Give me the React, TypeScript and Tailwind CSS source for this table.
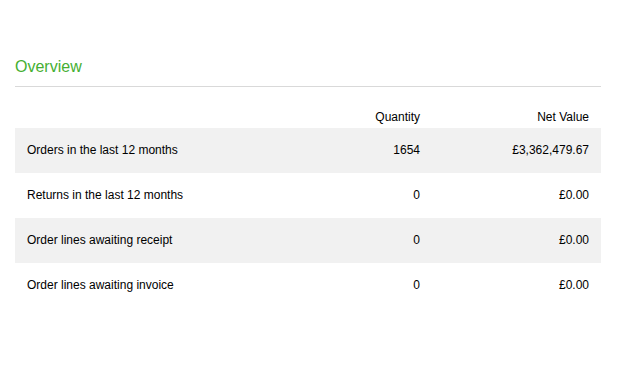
export default function App() {
  const rows = [
    { label: "Orders in the last 12 months", qty: "1654", value: "£3,362,479.67" },
    { label: "Returns in the last 12 months", qty: "0", value: "£0.00" },
    { label: "Order lines awaiting receipt", qty: "0", value: "£0.00" },
    { label: "Order lines awaiting invoice", qty: "0", value: "£0.00" },
  ];

  return (
    <div className="min-h-screen bg-white pl-[15px] pt-[57px] font-['Liberation_Sans',Arial,sans-serif] text-black">
      <div className="w-[586px]">
        <h2 className="text-[16px] leading-[20px] text-[#45af32] pb-[9px] border-b border-[#d9d9d9]">Overview</h2>
        <table className="w-full mt-[19px] text-[12px] border-collapse">
          <thead>
            <tr className="h-[22px]">
              <th className="font-normal text-left pl-3"></th>
              <th className="font-normal text-right w-[120px] align-middle">Quantity</th>
              <th className="font-normal text-right w-[181px] pr-3 align-middle">Net Value</th>
            </tr>
          </thead>
          <tbody>
            {rows.map((r, i) => (
              <tr key={i} className={`h-[45px] ${i % 2 === 0 ? "bg-[#f1f1f1]" : "bg-white"}`}>
                <td className="pl-3 text-left pb-px">{r.label}</td>
                <td className="text-right pb-px">{r.qty}</td>
                <td className="text-right pr-3 pb-px">{r.value}</td>
              </tr>
            ))}
          </tbody>
        </table>
      </div>
    </div>
  );
}
